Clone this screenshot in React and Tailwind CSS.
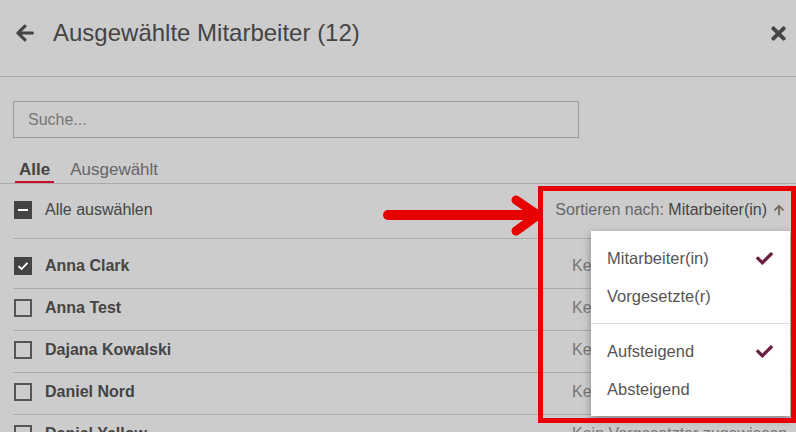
import React from 'react';
import { FaArrowLeft, FaTimes, FaArrowUp, FaCheck } from 'react-icons/fa';

const ROWS = [
  { name: 'Anna Clark', checked: true },
  { name: 'Anna Test' },
  { name: 'Dajana Kowalski' },
  { name: 'Daniel Nord' },
  { name: 'Daniel Yellow' },
];

const font = { fontFamily: '"Liberation Sans", Arial, sans-serif' };

function Box({ state }) {
  if (state === 'checked')
    return (
      <span className="w-[18px] h-[18px] bg-[#444] flex items-center justify-center shrink-0">
        <svg width="12" height="10" viewBox="0 0 12 10">
          <path d="M1.5 5.2 L4.6 8 L10.5 1.8" fill="none" stroke="#fff" strokeWidth="1.8" />
        </svg>
      </span>
    );
  if (state === 'partial')
    return (
      <span className="w-[18px] h-[18px] bg-[#444] flex items-center justify-center shrink-0">
        <span className="w-[10px] h-[2px] bg-white" />
      </span>
    );
  return <span className="block w-[18px] h-[18px] border-2 border-[#555] shrink-0" />;
}

export default function App() {
  return (
    <div className="relative w-[796px] h-[432px] overflow-hidden bg-[#cccccc] text-[#444]" style={font}>
      <div className="h-[77px] flex items-center pb-[10px] border-b border-[#aaa] pl-[15px] pr-[7px]">
        <FaArrowLeft size={20} className="text-[#444]" />
        <div className="ml-[18px] text-[24px] text-[#444] flex-1">Ausgewählte Mitarbeiter (12)</div>
        <FaTimes size={21} className="text-[#444]" />
      </div>

      <div className="px-[13px] pt-[24px]">
        <div className="w-[566px] h-[37px] border border-[#999] flex items-center px-[14px] text-[16px] text-[#777]">
          Suche...
        </div>
      </div>

      <div className="mt-[21px] border-b border-[#aaa] flex pl-[15px] text-[17px]">
        <div className="px-[4px] pb-[1px] border-b-2 border-[#c8102e] font-bold text-[#444] leading-[21px]">Alle</div>
        <div className="ml-[12px] px-[4px] pb-[1px] text-[#666] leading-[21px]">Ausgewählt</div>
      </div>

      <div className="ml-[13px]">
        <div className="h-[55px] border-b border-[#aaa] flex items-center pb-[2px] pr-[11px] text-[16px]">
          <div className="ml-[1px]">
            <Box state="partial" />
          </div>
          <span className="ml-[13px] flex-1">Alle auswählen</span>
          <span className="text-[#666]">Sortieren nach:&nbsp;</span>
          <span className="text-[#444]">Mitarbeiter(in)</span>
          <FaArrowUp size={12} className="ml-[6px] text-[#7a6b5d]" />
        </div>

        <div className="pt-[8px]">
          {ROWS.map((r) => (
            <div key={r.name} className="h-[42px] border-b border-[#aaa] flex items-center pb-[4px] text-[16px]">
              <div className="ml-[1px]">
                <Box state={r.checked ? 'checked' : 'empty'} />
              </div>
              <span className="ml-[13px] flex-1 font-bold">{r.name}</span>
              <span className="w-[224px] text-[#777]">Kein Vorgesetzter zugewiesen</span>
            </div>
          ))}
        </div>
      </div>

      <div className="absolute left-[591px] top-[231px] w-[199px] bg-white shadow-[0_3px_8px_rgba(0,0,0,0.35)] py-[8px] text-[16.5px] text-[#555]">
        <div className="h-[38px] flex items-center justify-between pl-[16px] pr-[17px]">
          <span>Mitarbeiter(in)</span>
          <FaCheck size={17} className="text-[#6b1e41]" />
        </div>
        <div className="h-[38px] flex items-center pl-[16px]">Vorgesetzte(r)</div>
        <div className="my-[8px] border-t border-[#ddd]" />
        <div className="h-[38px] flex items-center justify-between pl-[16px] pr-[17px]">
          <span>Aufsteigend</span>
          <FaCheck size={17} className="text-[#6b1e41]" />
        </div>
        <div className="h-[38px] flex items-center pl-[16px]">Absteigend</div>
      </div>

      <div className="absolute left-[538px] top-[186px] w-[258px] h-[237px] border-[5px] border-[#e60000]" />
      <svg className="absolute left-[380px] top-[192px]" width="170" height="45" viewBox="0 0 170 45">
        <path d="M8 23 L152 23" stroke="#e60000" strokeWidth="10" strokeLinecap="round" />
        <path d="M136 8 L158 23 L136 39" fill="none" stroke="#e60000" strokeWidth="9" strokeLinecap="round" strokeLinejoin="round" />
      </svg>
    </div>
  );
}
